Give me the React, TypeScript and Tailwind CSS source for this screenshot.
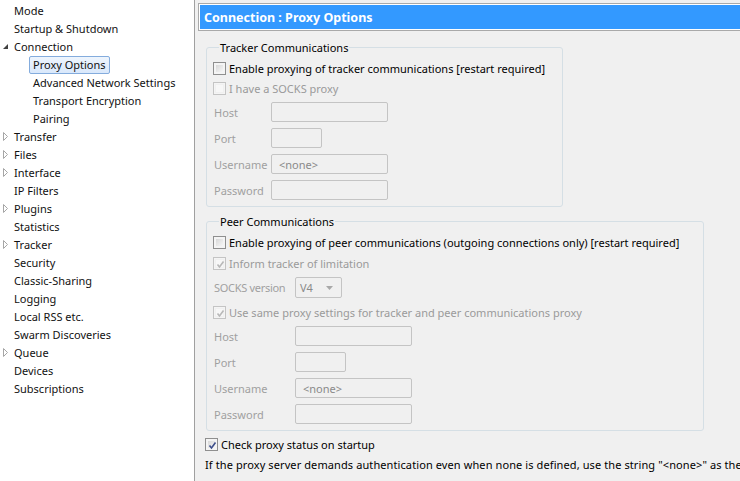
import React from "react";

type Item = { label: string; level: 0 | 1; arrow?: "open" | "closed"; selected?: boolean };

const items: Item[] = [
  { label: "Mode", level: 0 },
  { label: "Startup & Shutdown", level: 0 },
  { label: "Connection", level: 0, arrow: "open" },
  { label: "Proxy Options", level: 1, selected: true },
  { label: "Advanced Network Settings", level: 1 },
  { label: "Transport Encryption", level: 1 },
  { label: "Pairing", level: 1 },
  { label: "Transfer", level: 0, arrow: "closed" },
  { label: "Files", level: 0, arrow: "closed" },
  { label: "Interface", level: 0, arrow: "closed" },
  { label: "IP Filters", level: 0 },
  { label: "Plugins", level: 0, arrow: "closed" },
  { label: "Statistics", level: 0 },
  { label: "Tracker", level: 0, arrow: "closed" },
  { label: "Security", level: 0 },
  { label: "Classic-Sharing", level: 0 },
  { label: "Logging", level: 0 },
  { label: "Local RSS etc.", level: 0 },
  { label: "Swarm Discoveries", level: 0 },
  { label: "Queue", level: 0, arrow: "closed" },
  { label: "Devices", level: 0 },
  { label: "Subscriptions", level: 0 },
];

function Arrow({ kind }: { kind: "open" | "closed" }) {
  if (kind === "open") {
    return (
      <svg className="absolute left-[2px] top-[6px]" width="7" height="7" viewBox="0 0 7 7">
        <path d="M6 1 L6 6 L1 6 Z" fill="#404040" />
      </svg>
    );
  }
  return (
    <svg className="absolute left-[3px] top-[5px]" width="6" height="9" viewBox="0 0 6 9">
      <path d="M0.5 0.5 L4.5 4.5 L0.5 8.5 Z" fill="#ffffff" stroke="#a6a6a6" strokeWidth="1" />
    </svg>
  );
}

function Checkbox({ checked, disabled }: { checked?: boolean; disabled?: boolean }) {
  return (
    <span
      className={
        "relative inline-block w-[13px] h-[13px] shrink-0 border " +
        (disabled ? "border-[#c4c4c4] bg-[#f4f4f4]" : "border-[#8f8f8f] bg-[#f4f4f4]")
      }
    >
      <span
        className={
          "absolute inset-[1px] border " +
          (disabled
            ? "border-[#f0f0f0] bg-[#f7f7f7]"
            : "border-[#f4f4f4] bg-gradient-to-br from-[#d8d8d8] to-[#f6f6f6]")
        }
      />
      {checked && (
        <svg className="absolute left-[1px] top-[1px]" width="11" height="11" viewBox="0 0 11 11">
          <path
            d="M2.5 5.5 L4.5 8 L8.5 2.5"
            fill="none"
            stroke={disabled ? "#b8b8b8" : "#3d4e8a"}
            strokeWidth="1.6"
          />
        </svg>
      )}
    </span>
  );
}

function CheckRow({
  label,
  checked,
  disabled,
  className = "",
}: {
  label: string;
  checked?: boolean;
  disabled?: boolean;
  className?: string;
}) {
  return (
    <div className={"h-[20px] flex items-center gap-[3px] " + className}>
      <Checkbox checked={checked} disabled={disabled} />
      <span className={disabled ? "text-[#9a9a9a]" : "text-black"}>{label}</span>
    </div>
  );
}

function Field({ label, value, w, labelW }: { label: string; value?: string; w: number; labelW: string }) {
  return (
    <div className="h-[20px] flex items-center">
      <span className={"ml-[1px] text-[#a0a0a0] " + labelW}>{label}</span>
      <div
        className={
          "h-[20px] border border-[#c4c4c4] rounded-[2px] bg-[#f0f0f0] flex items-center pl-[7px] text-[#8a8a8a] " +
          (w === 117 ? "w-[117px]" : "w-[51px]")
        }
      >
        {value}
      </div>
    </div>
  );
}

export default function App() {
  return (
    <div
      className="w-[740px] h-[481px] flex overflow-hidden bg-[#f0f0f0] text-[11px] leading-[15px] whitespace-nowrap"
      style={{ fontFamily: '"Noto Sans", "Open Sans", sans-serif' }}
    >
      <aside className="w-[195px] shrink-0 bg-white border-r border-[#a0a0a0] pt-[1px] text-[#111]">
        {items.map((it) => (
          <div key={it.label} className="relative h-[18px] flex items-center">
            {it.arrow && <Arrow kind={it.arrow} />}
            {it.level === 0 ? (
              <span className="pl-[14px]">{it.label}</span>
            ) : it.selected ? (
              <span className="ml-[29px] mt-[1px] h-[18px] flex items-center px-[3px] border border-[#84acdd] rounded-[2px] bg-gradient-to-b from-[#eef5fd] to-[#d9e8fb]">
                {it.label}
              </span>
            ) : (
              <span className="pl-[33px]">{it.label}</span>
            )}
          </div>
        ))}
      </aside>

      <main className="flex-1 min-w-0 pt-[3px] pl-[3px]">
        <div className="w-[560px] border border-[#a9a9a9] bg-white p-px">
          <div className="h-[24px] bg-[#3399ff] text-white font-bold text-[12.5px] pl-[4px] flex items-center">
            Connection : Proxy Options
          </div>
        </div>

        <fieldset className="mt-[9px] ml-[8px] w-[357px] border border-[#d5dfe5] rounded-[3px] pl-[6px] pb-[6px]">
          <legend className="ml-[6px] px-[1px] text-black">Tracker Communications</legend>
          <CheckRow className="mt-[3px]" label="Enable proxying of tracker communications [restart required]" />
          <CheckRow label="I have a SOCKS proxy" disabled />
          <div className="mt-[4px] flex flex-col gap-[6px]">
            <Field label="Host" w={117} labelW="w-[57px]" />
            <Field label="Port" w={51} labelW="w-[57px]" />
            <Field label="Username" value="<none>" w={117} labelW="w-[57px]" />
            <Field label="Password" w={117} labelW="w-[57px]" />
          </div>
        </fieldset>

        <fieldset className="mt-[7px] ml-[8px] w-[498px] border border-[#d5dfe5] rounded-[3px] pl-[6px] pb-[6px]">
          <legend className="ml-[6px] px-[1px] text-black">Peer Communications</legend>
          <CheckRow
            className="mt-[3px]"
            label="Enable proxying of peer communications (outgoing connections only) [restart required]"
          />
          <CheckRow className="mt-[1px]" label="Inform tracker of limitation" checked disabled />
          <div className="mt-[4px] h-[21px] flex items-center">
            <span className="ml-[1px] w-[81px] text-[#a0a0a0] tracking-[-0.3px]">SOCKS version</span>
            <div className="w-[47px] h-[21px] border border-[#c4c4c4] rounded-[2px] bg-[#f0f0f0] flex items-center pl-[4px] text-[#8a8a8a] relative">
              V4
              <svg className="absolute right-[8px] top-[8px]" width="7" height="4" viewBox="0 0 7 4">
                <path d="M0 0 L7 0 L3.5 4 Z" fill="#a8a8a8" />
              </svg>
            </div>
          </div>
          <CheckRow
            className="mt-[4px]"
            label="Use same proxy settings for tracker and peer communications proxy"
            checked
            disabled
          />
          <div className="mt-[4px] flex flex-col gap-[6px]">
            <Field label="Host" w={117} labelW="w-[81px]" />
            <Field label="Port" w={51} labelW="w-[81px]" />
            <Field label="Username" value="<none>" w={117} labelW="w-[81px]" />
            <Field label="Password" w={117} labelW="w-[81px]" />
          </div>
        </fieldset>

        <CheckRow className="mt-[3px] ml-[7px]" label="Check proxy status on startup" checked />
        <div className="h-[20px] flex items-center ml-[7px] text-black tracking-[0.1px]">
          If the proxy server demands authentication even when none is defined, use the string "&lt;none&gt;" as the
        </div>
      </main>
    </div>
  );
}
